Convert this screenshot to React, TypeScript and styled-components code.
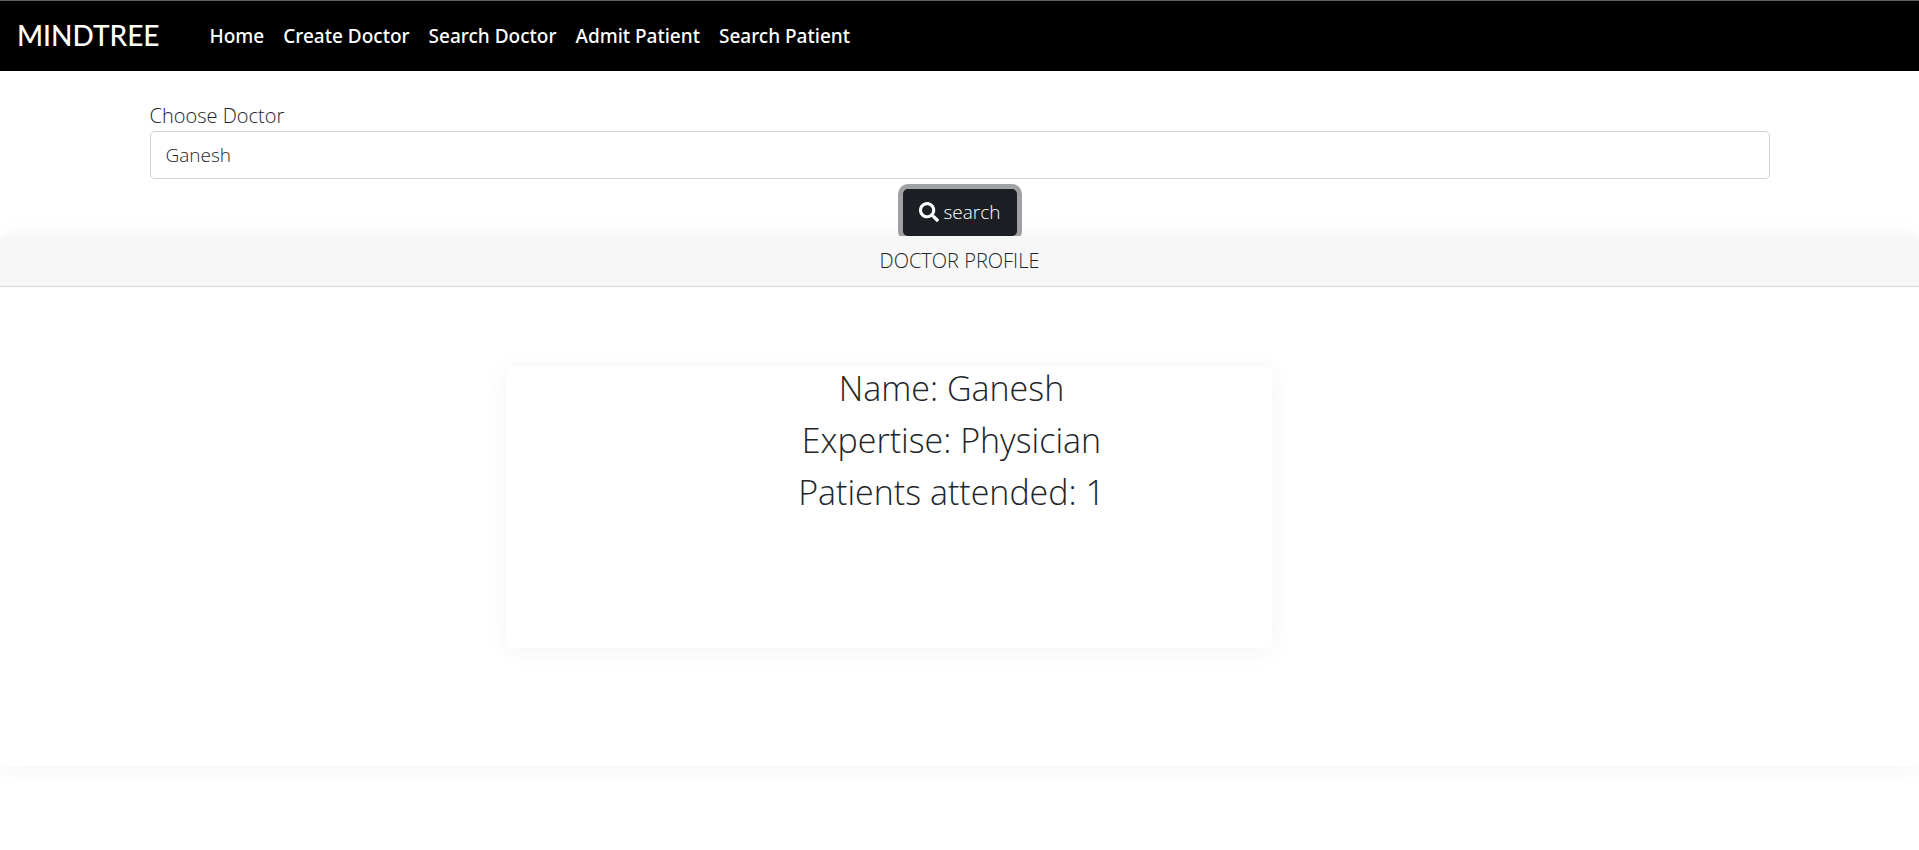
import React, { useState } from "react";
import styled, { createGlobalStyle } from "styled-components";
import { FaSearch } from "react-icons/fa";

const GlobalStyle = createGlobalStyle`
  *, *::before, *::after {
    box-sizing: border-box;
  }
  body {
    margin: 0;
    background: #fff;
    color: #212529;
    font-family: "Open Sans", sans-serif;
    font-size: 20px;
    font-weight: 300;
    line-height: 30px;
  }
`;

const Page = styled.div`
  min-height: 100vh;
`;

const Navbar = styled.header`
  display: flex;
  align-items: center;
  gap: 50px;
  height: 71px;
  padding: 0 17px;
  border-top: 1px solid #5f5f5f;
  background: #000;
`;

const Brand = styled.a`
  padding-bottom: 3px;
  color: #fff;
  font-family: Lato, sans-serif;
  font-size: 28px;
  font-weight: 500;
  text-decoration: none;
`;

const NavLinks = styled.nav`
  display: flex;
  gap: 19px;
`;

const NavLink = styled.a`
  padding: 10px 0;
  color: #fff;
  font-family: "Noto Sans", sans-serif;
  font-size: 19px;
  font-weight: 500;
  text-decoration: none;
`;

const SearchForm = styled.form`
  display: flex;
  flex-direction: column;
  align-items: center;
  width: 100%;
  max-width: 1650px;
  margin: 0 auto;
  padding: 30px 15px 0;
`;

const FieldLabel = styled.label`
  align-self: stretch;
`;

const DoctorSelect = styled.select`
  appearance: none;
  width: 100%;
  height: 48px;
  padding: 0 15px;
  border: 1px solid #ced4da;
  border-radius: 5px;
  background: #fff;
  color: #212529;
  font: inherit;
  font-size: 19px;
`;

const SearchButton = styled.button`
  display: flex;
  align-items: center;
  gap: 5px;
  height: 47px;
  margin-top: 10px;
  padding: 0 16px 2px;
  border: 0;
  border-radius: 5px;
  background: #1c1f23;
  box-shadow: 0 0 0 5px rgba(66, 70, 73, 0.5);
  color: #fff;
  font: inherit;
  font-size: 19px;
`;

/* Sits above the form so the button's focus ring ends at the panel edge. */
const ProfilePanel = styled.section`
  position: relative;
  border-radius: 5px;
  background: #fff;
  box-shadow: 0 2px 25px rgba(5, 50, 30, 0.06);
`;

const PanelTitle = styled.h2`
  margin: 0;
  padding: 10px 20px;
  border-bottom: 1px solid #d8d8d8;
  border-radius: 5px 5px 0 0;
  background: #f7f7f7;
  font-size: 20px;
  font-weight: 300;
  line-height: 30px;
  text-align: center;
`;

const PanelBody = styled.div`
  display: flex;
  justify-content: center;
  padding: 80px 140px 118px 0;
`;

const DoctorCard = styled.article`
  width: 765px;
  min-height: 281px;
  padding-left: 124px;
  border-radius: 5px;
  background: #fff;
  box-shadow: 0 2px 25px rgba(5, 50, 30, 0.06);
  text-align: center;
`;

const Detail = styled.h3`
  margin: 0 0 10px;
  font-size: 34px;
  font-weight: 300;
  line-height: 42px;
`;

const links = ["Home", "Create Doctor", "Search Doctor", "Admit Patient", "Search Patient"];

export default function App() {
  const [doctor, setDoctor] = useState("Ganesh");

  return (
    <Page>
      <GlobalStyle />
      <Navbar>
        <Brand href="#">MINDTREE</Brand>
        <NavLinks>
          {links.map((link) => (
            <NavLink key={link} href="#">
              {link}
            </NavLink>
          ))}
        </NavLinks>
      </Navbar>
      <main>
        <SearchForm onSubmit={(event) => event.preventDefault()}>
          <FieldLabel htmlFor="doctor">Choose Doctor</FieldLabel>
          <DoctorSelect
            id="doctor"
            value={doctor}
            onChange={(event) => setDoctor(event.target.value)}
          >
            <option>Ganesh</option>
          </DoctorSelect>
          <SearchButton type="submit">
            <FaSearch size={20} aria-hidden="true" />
            search
          </SearchButton>
        </SearchForm>
        <ProfilePanel>
          <PanelTitle>DOCTOR PROFILE</PanelTitle>
          <PanelBody>
            <DoctorCard>
              <Detail>Name: {doctor}</Detail>
              <Detail>Expertise: Physician</Detail>
              <Detail>Patients attended: 1</Detail>
            </DoctorCard>
          </PanelBody>
        </ProfilePanel>
      </main>
    </Page>
  );
}
